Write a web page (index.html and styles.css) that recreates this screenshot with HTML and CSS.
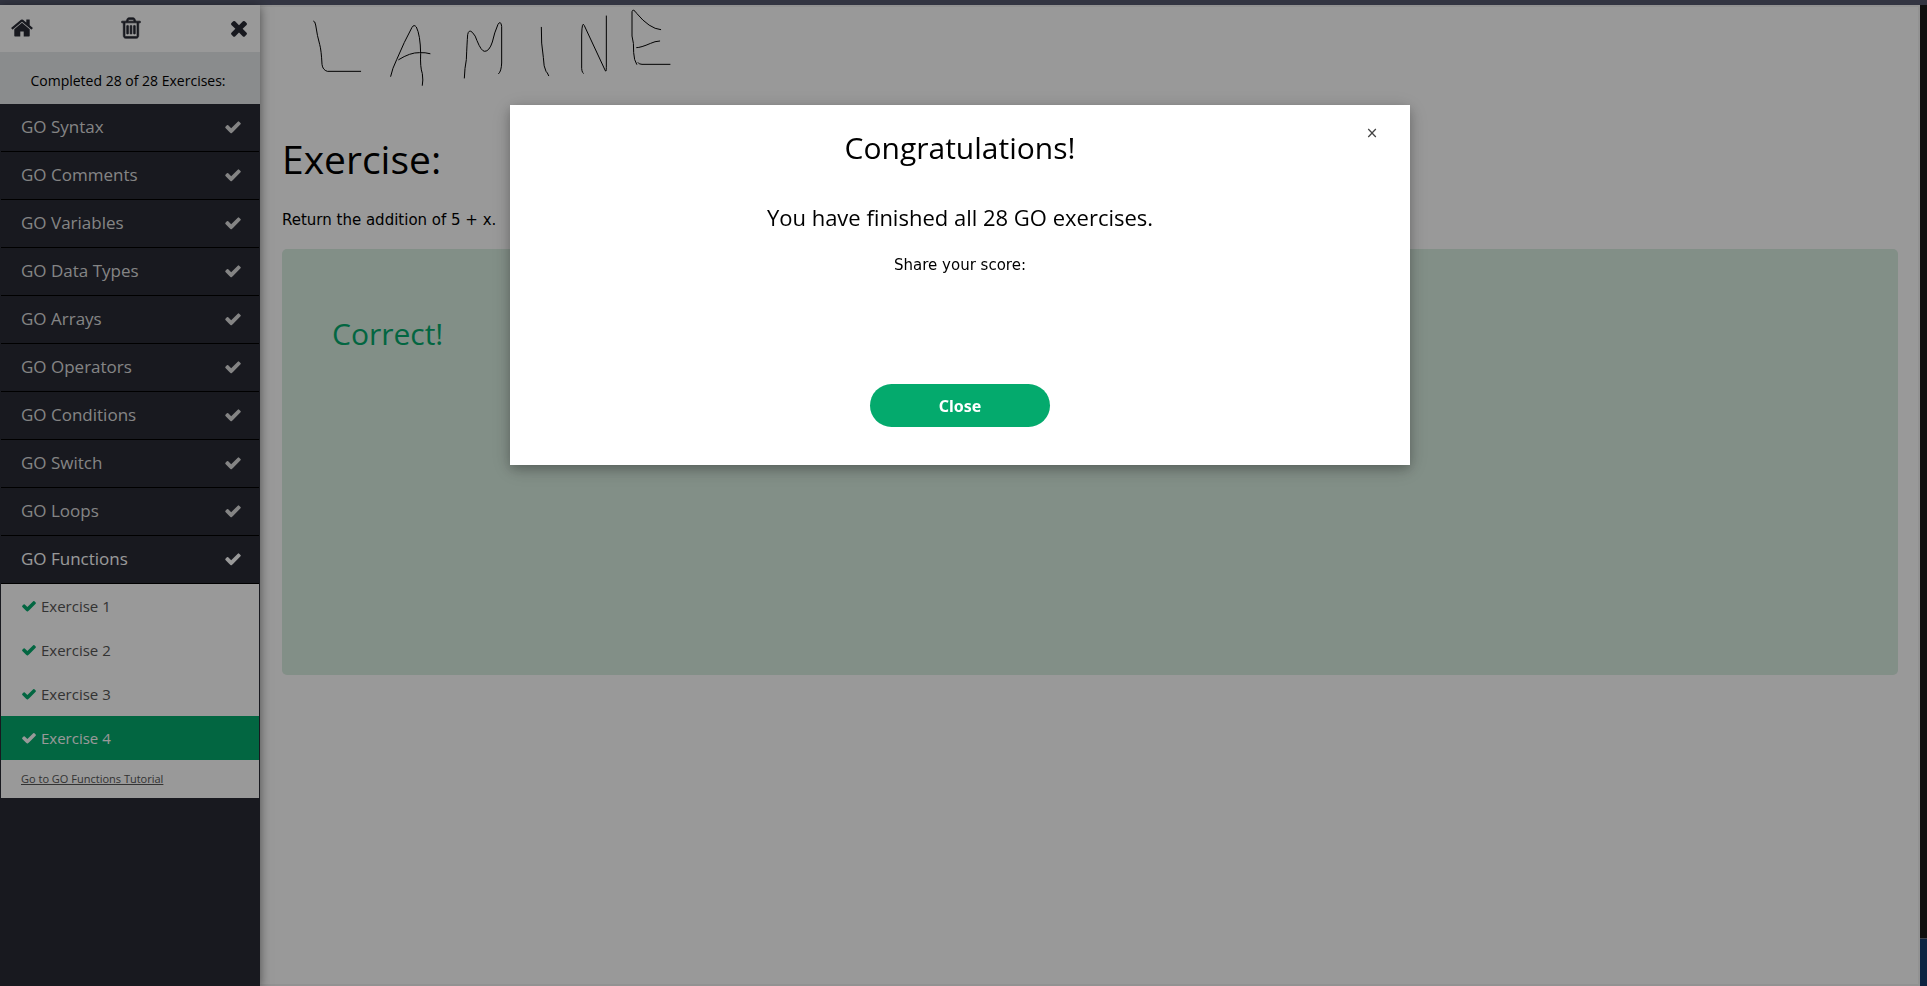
FILE: index.html
```html
<!DOCTYPE html>
<html lang="en">
<head>
<meta charset="utf-8">
<title>GO Exercises</title>
<link rel="stylesheet" href="styles.css">
</head>
<body>
<svg class="symbols" aria-hidden="true">
  <symbol id="home" viewBox="0 0 1792 1792"><path d="M1472 992v480q0 26-19 45t-45 19h-384v-384h-256v384h-384q-26 0-45-19t-19-45v-480q0-1 .5-3t.5-3l575-474 575 474q1 2 1 6zm223-69l-62 74q-8 9-21 11h-3q-13 0-21-7l-692-577-692 577q-12 8-24 7-13-2-21-11l-62-74q-8-10-7-23.5t11-21.5l719-599q32-26 76-26t76 26l244 204v-195q0-14 9-23t23-9h192q14 0 23 9t9 23v408l219 182q10 8 11 21.5t-7 23.5z"/></symbol>
  <symbol id="trash" viewBox="0 0 1792 1792"><path d="M704 736v576q0 14-9 23t-23 9h-64q-14 0-23-9t-9-23v-576q0-14 9-23t23-9h64q14 0 23 9t9 23zm256 0v576q0 14-9 23t-23 9h-64q-14 0-23-9t-9-23v-576q0-14 9-23t23-9h64q14 0 23 9t9 23zm256 0v576q0 14-9 23t-23 9h-64q-14 0-23-9t-9-23v-576q0-14 9-23t23-9h64q14 0 23 9t9 23zm128 724v-948h-896v948q0 22 7 40.500t14.500 27 10.500 8.500h832q3 0 10.500-8.500t14.500-27 7-40.500zm-672-1076h448l-48-117q-7-9-17-11h-317q-10 2-17 11zm928 32v64q0 14-9 23t-23 9h-96v948q0 83-47 143.500t-113 60.500h-832q-66 0-113-58.500t-47-141.500v-952h-96q-14 0-23-9t-9-23v-64q0-14 9-23t23-9h309l70-167q15-37 54-63t79-26h320q40 0 79 26t54 63l70 167h309q14 0 23 9t9 23z"/></symbol>
  <symbol id="times" viewBox="0 0 1792 1792"><path d="M1490 1322q0 40-28 68l-136 136q-28 28-68 28t-68-28l-294-294-294 294q-28 28-68 28t-68-28l-136-136q-28-28-28-68t28-68l294-294-294-294q-28-28-28-68t28-68l136-136q28-28 68-28t68 28l294 294 294-294q28-28 68-28t68 28l136 136q28 28 28 68t-28 68l-294 294 294 294q28 28 28 68z"/></symbol>
  <symbol id="check" viewBox="0 0 1792 1792"><path d="M1671 566q0 40-28 68l-724 724-136 136q-28 28-68 28t-68-28l-136-136-362-362q-28-28-28-68t28-68l136-136q28-28 68-28t68 28l294 295 656-657q28-28 68-28t68 28l136 136q28 28 28 68z"/></symbol>
</svg>

<div class="page">
  <div class="topbar"></div>
  <div class="columns">
    <nav class="sidebar" aria-label="Exercises">
      <div class="tools">
        <a class="tool" href="#" aria-label="Home"><svg class="icon-lg"><use href="#home"/></svg></a>
        <button class="tool" type="button" aria-label="Reset score"><svg class="icon-lg icon-bold"><use href="#trash"/></svg></button>
        <button class="tool" type="button" aria-label="Close menu"><svg class="icon-lg"><use href="#times"/></svg></button>
      </div>
      <div class="progress">Completed 28 of 28 Exercises:</div>
      <div class="menu">
        <a class="topic" href="#">GO Syntax<svg class="icon-md"><use href="#check"/></svg></a>
        <a class="topic" href="#">GO Comments<svg class="icon-md"><use href="#check"/></svg></a>
        <a class="topic" href="#">GO Variables<svg class="icon-md"><use href="#check"/></svg></a>
        <a class="topic" href="#">GO Data Types<svg class="icon-md"><use href="#check"/></svg></a>
        <a class="topic" href="#">GO Arrays<svg class="icon-md"><use href="#check"/></svg></a>
        <a class="topic" href="#">GO Operators<svg class="icon-md"><use href="#check"/></svg></a>
        <a class="topic" href="#">GO Conditions<svg class="icon-md"><use href="#check"/></svg></a>
        <a class="topic" href="#">GO Switch<svg class="icon-md"><use href="#check"/></svg></a>
        <a class="topic" href="#">GO Loops<svg class="icon-md"><use href="#check"/></svg></a>
        <a class="topic topic-open" href="#">GO Functions<svg class="icon-md"><use href="#check"/></svg></a>
        <div class="exercises">
          <a class="exercise" href="#"><svg class="icon-sm"><use href="#check"/></svg>Exercise 1</a>
          <a class="exercise" href="#"><svg class="icon-sm"><use href="#check"/></svg>Exercise 2</a>
          <a class="exercise" href="#"><svg class="icon-sm"><use href="#check"/></svg>Exercise 3</a>
          <a class="exercise exercise-current" href="#"><svg class="icon-sm"><use href="#check"/></svg>Exercise 4</a>
          <a class="tutorial" href="#">Go to GO Functions Tutorial</a>
        </div>
      </div>
    </nav>
    <main class="content">
      <h1 class="title">Exercise:</h1>
      <p class="task">Return the addition of 5 + x.</p>
      <section class="answer"><h2 class="result">Correct!</h2></section>
    </main>
    <div class="edge"><div class="edge-panel"></div></div>
  </div>
</div>

<div class="overlay">
  <div class="dialog" role="dialog" aria-modal="true" aria-labelledby="dialog-title">
    <button class="dismiss" type="button" aria-label="Dismiss">×</button>
    <h2 class="dialog-title" id="dialog-title">Congratulations!</h2>
    <h3 class="dialog-text">You have finished all 28 GO exercises.</h3>
    <p class="share">Share your score:</p>
    <button class="close" type="button">Close</button>
  </div>
</div>

<svg class="signature" viewBox="0 0 1260 300" role="img" aria-label="LAMINE">
  <path d="M131 63q4 0 6 12 5 35 12 58 5 18 7 60 2 17 16 21h100"/>
  <path d="M362 229q5-24 18-50 23-55 46-97 6-10 13-1 12 24 13 80-2 40 5 60 3 20 0 35M386 179q35-22 62-21 18-1 32 3"/>
  <path d="M583 234q1-30 6-55 2-50 4-75 3-17 14-7 10 10 14 25 13 32 23 32 14 0 23-28 6-28 17-53 8-13 11 6v110q-1 25-9 32"/>
  <path d="M814 82q-1 50 6 90 1 30 8 42 4 3 8 13"/>
  <path d="M940 220q-6-3-5-25V105q1-44 8-28l62 133q4 10 4-8V48"/>
  <path d="M1100 193q-8-12-9-35 1-30-5-50V35q3-11 14 5 38 46 72 49M1100 143q12 0 42-13 12-6 27-7M1104 188q2 5 12 5h84"/>
</svg>
</body>
</html>
```
FILE: styles.css
```css
* { box-sizing: border-box; }

body {
  margin: 0;
  font-family: "DejaVu Sans", Verdana, sans-serif;
  font-size: 15px;
  line-height: 22px;
  color: #000;
}

svg { fill: currentColor; flex: none; }
a { color: inherit; text-decoration: none; }
button { border: 0; padding: 0; background: none; color: inherit; cursor: pointer; }
h1, h2, h3, p { margin: 0; }
.symbols { display: none; }

.page { display: flex; flex-direction: column; min-height: 100vh; }
.topbar { height: 5px; background: #55596f; }
.columns { flex: 1; display: flex; }

.icon-lg { width: 24px; height: 24px; display: block; }
.icon-bold { stroke: currentColor; stroke-width: 50; }
.icon-md { width: 18px; height: 18px; }
.icon-sm { width: 16px; height: 16px; color: #04aa6d; }

.sidebar {
  width: 260px;
  flex: none;
  background: #282a35;
  font-family: "Open Sans", "Segoe UI", sans-serif;
  box-shadow: 0 2px 10px rgba(0, 0, 0, .5);
  z-index: 1;
}
.tools {
  display: flex;
  align-items: center;
  justify-content: space-between;
  height: 47px;
  padding: 0 9px 2px 10px;
  background: #fff;
  color: #282a35;
}
.progress {
  height: 52px;
  padding: 8px 4px 0 0;
  background: #e7e9eb;
  font-size: 14px;
  line-height: 42px;
  text-align: center;
}
.menu { padding: 0 1px; }
.topic {
  display: flex;
  align-items: center;
  justify-content: space-between;
  height: 48px;
  padding: 0 17px 2px 20px;
  border-bottom: 1px solid #000;
  color: #ddd;
  font-size: 17px;
}
.topic-open { color: #fff; }
.exercises { background: #fff; color: #555; }
.exercise {
  display: flex;
  align-items: center;
  gap: 4px;
  height: 44px;
  padding: 0 20px;
}
.exercise-current { background: #04aa6d; color: #fff; }
.exercise-current .icon-sm { color: #fff; }
.tutorial {
  display: block;
  padding: 0 20px;
  font-size: 11px;
  line-height: 38px;
  text-decoration: underline;
}

.content {
  flex: 1;
  padding: 122px 20px 0 22px;
  border: solid #f3f3f3;
  border-width: 2px 2px 2px 0;
}
.title {
  font: 400 39px/60px "Open Sans", "Segoe UI", sans-serif;
}
.task { margin-top: 20px; }
.answer {
  height: 426px;
  margin-top: 18px;
  padding: 62px 50px;
  border-radius: 5px;
  background: #d9eee1;
}
.result {
  color: #04aa6d;
  font: 400 30px/46px "Open Sans", "Segoe UI", sans-serif;
}

.edge {
  width: 7px;
  display: flex;
  flex-direction: column;
  justify-content: flex-end;
  background: #1a1a1a;
}
.edge-panel { height: 48px; border-top: 1px solid #666f80; background: #163c6e; }

.overlay {
  position: fixed;
  inset: 0;
  z-index: 2;
  padding: 105px 7px 0 0;
  background: rgba(0, 0, 0, .4);
}
.dialog {
  position: relative;
  display: flex;
  flex-direction: column;
  align-items: center;
  width: 900px;
  max-width: 100%;
  margin: 0 auto;
  padding: 20px 32px 38px;
  background: #fff;
  box-shadow: 0 4px 10px rgba(0, 0, 0, .2), 0 4px 20px rgba(0, 0, 0, .19);
}
.dismiss {
  position: absolute;
  top: 17px;
  right: 30px;
  width: 16px;
  color: #444;
  font: 15px/22px "DejaVu Sans", sans-serif;
}
.dialog-title { font: 400 30px/46px "Open Sans", "Segoe UI", sans-serif; }
.dialog-text {
  margin-top: 28px;
  font: 400 22px/36px "Open Sans", "Segoe UI", sans-serif;
}
.share { margin-top: 19px; }
.close {
  width: 180px;
  height: 43px;
  margin-top: 108px;
  border-radius: 22px;
  background: #04aa6d;
  color: #fff;
  font: 700 16px "Noto Sans", sans-serif;
}

.signature {
  position: absolute;
  top: 0;
  left: 270px;
  z-index: 3;
  width: 420px;
  height: 100px;
  fill: none;
  stroke: #000;
  stroke-width: 3;
  stroke-linecap: round;
  pointer-events: none;
}
```
